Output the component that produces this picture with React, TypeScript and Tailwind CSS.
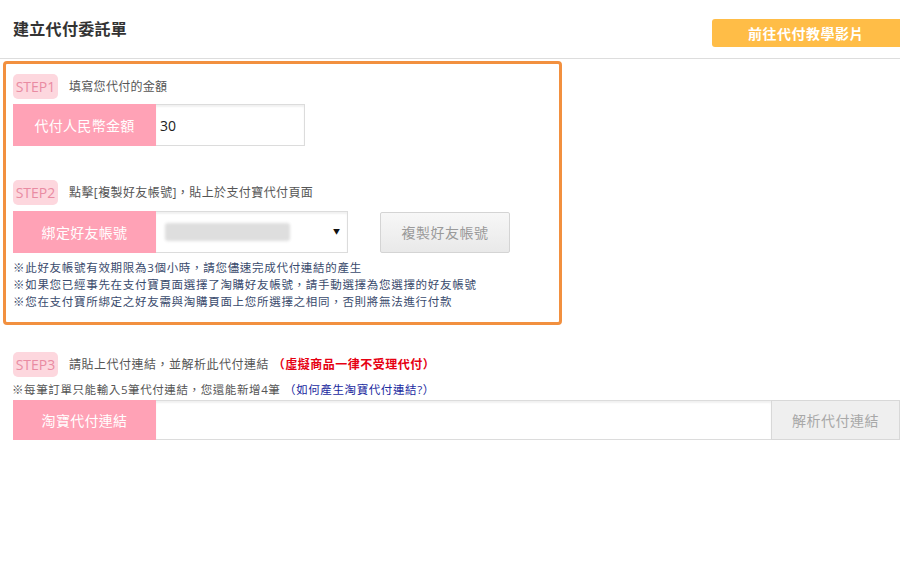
import React from 'react';

const font = { fontFamily: '"Open Sans", "Noto Sans CJK TC", sans-serif' };

function StepBadge({ n }: { n: number }) {
  return (
    <span className="inline-flex items-center justify-center w-[45px] h-[25px] rounded-[5px] bg-[#fdd7de] text-[#e98ba2] text-[14px] leading-none">
      STEP{n}
    </span>
  );
}

function Label({ children, h = 'h-[42px]' }: { children: React.ReactNode; h?: string }) {
  return (
    <div className={`w-[143px] ${h} shrink-0 bg-[#ffa2b6] text-white text-[14px] tracking-[0.3px] flex items-center justify-center`}>
      {children}
    </div>
  );
}

export default function App() {
  return (
    <div className="w-[900px] h-[580px] bg-white overflow-hidden text-[#333]" style={font}>
      {/* Header */}
      <header className="h-[59px] border-b border-[#dddddd] flex items-start justify-between">
        <h1 className="pl-[13px] pt-[17px] text-[16px] font-semibold text-[#333] tracking-[0.3px]">建立代付委託單</h1>
        <button className="mt-[19px] w-[188px] h-[28px] rounded-l-[3px] bg-[#ffbd47] text-white text-[14px] font-bold tracking-[0.5px] flex items-center justify-center">
          前往代付教學影片
        </button>
      </header>

      {/* Step 1 & 2 box */}
      <section className="ml-[3px] mt-[2px] w-[559px] border-[3px] border-[#f2903f] rounded-[4px] pl-[7px] pt-[10px] pb-[12px]">
        <div className="flex items-center gap-[11px]">
          <StepBadge n={1} />
          <span className="text-[12px] text-[#555] tracking-[0.3px]">填寫您代付的金額</span>
        </div>
        <div className="flex mt-[5px]">
          <Label>代付人民幣金額</Label>
          <div className="w-[149px] h-[42px] border border-[#dcdcdc] border-l-0 shadow-[inset_0_2px_2px_rgba(0,0,0,0.06)] flex items-center pl-[4px] text-[14px] text-[#222]">
            30
          </div>
        </div>

        <div className="flex items-center gap-[11px] mt-[34px]">
          <StepBadge n={2} />
          <span className="text-[12px] text-[#555] tracking-[0.4px]">點擊[複製好友帳號]，貼上於支付寶代付頁面</span>
        </div>
        <div className="flex mt-[6px] items-center">
          <Label>綁定好友帳號</Label>
          <div className="w-[192px] h-[42px] border border-[#dcdcdc] border-l-0 shadow-[inset_0_2px_2px_rgba(0,0,0,0.06)] flex items-center justify-between pl-[9px] pr-[7px]">
            <div className="w-[125px] h-[18px] bg-[#dedede] rounded-[3px] blur-[1.5px]" />
            <span className="text-[7px] text-[#111]">▼</span>
          </div>
          <button className="ml-[32px] w-[130px] h-[41px] border border-[#d4d4d4] rounded-[2px] bg-gradient-to-b from-[#f7f7f7] to-[#e9e9e9] text-[14px] text-[#9a9a9a] tracking-[0.5px]">
            複製好友帳號
          </button>
        </div>
        <div className="mt-[6px] text-[11.5px] leading-[17px] text-[#3a4b6d] tracking-[0.7px]">
          <p>※此好友帳號有效期限為3個小時，請您儘速完成代付連結的產生</p>
          <p>※如果您已經事先在支付寶頁面選擇了淘購好友帳號，請手動選擇為您選擇的好友帳號</p>
          <p>※您在支付寶所綁定之好友需與淘購頁面上您所選擇之相同，否則將無法進行付款</p>
        </div>
      </section>

      {/* Step 3 */}
      <section className="pl-[13px] mt-[27px]">
        <div className="flex items-center gap-[11px]">
          <StepBadge n={3} />
          <span className="text-[12px] text-[#555] tracking-[0.5px]">
            請貼上代付連結，並解析此代付連結
            <span className="text-[#e60012] font-semibold"> （虛擬商品一律不受理代付）</span>
          </span>
        </div>
        <p className="mt-[4px] -ml-[1px] text-[11.5px] leading-[17px] text-[#555] tracking-[0.6px]">
          ※每筆訂單只能輸入5筆代付連結，您還能新增4筆
          <span className="text-[#1a2aa0]"> （如何產生淘寶代付連結?）</span>
        </p>
        <div className="flex mt-[2px]">
          <Label h="h-[40px]">淘寶代付連結</Label>
          <div className="flex-1 h-[40px] border border-[#dcdcdc] border-l-0 border-r-0 shadow-[inset_0_2px_2px_rgba(0,0,0,0.06)]" />
          <button className="w-[129px] h-[40px] border border-[#d8d8d8] bg-[#efefef] text-[14px] text-[#a8a8a8] tracking-[0.5px]">
            解析代付連結
          </button>
        </div>
      </section>
    </div>
  );
}
